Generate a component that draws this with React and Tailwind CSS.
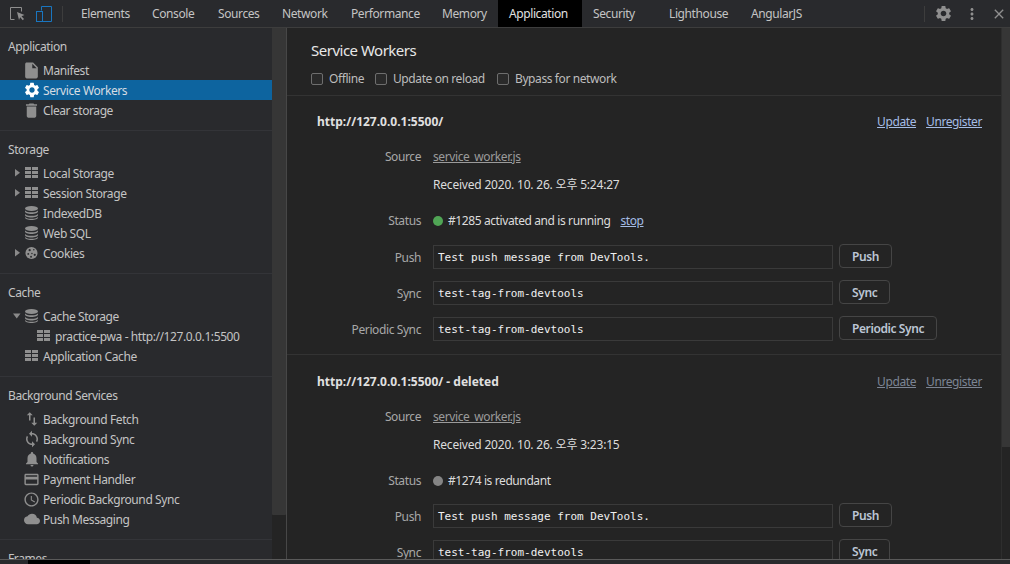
import {
  MdSettings,
  MdDelete,
  MdInsertDriveFile,
  MdSwapVert,
  MdSync,
  MdNotifications,
  MdCreditCard,
  MdAccessTime,
  MdCloud,
  MdMoreVert,
  MdClose,
} from "react-icons/md";

const tabs = [
  { name: "Elements", width: "w-[71px]" },
  { name: "Console", width: "w-[66px]" },
  { name: "Sources", width: "w-[64px]" },
  { name: "Network", width: "w-[69px]" },
  { name: "Performance", width: "w-[91px]" },
  { name: "Memory", width: "w-[67px]" },
  { name: "Application", width: "w-[84px]", active: true },
  { name: "Security", width: "w-[76px]" },
  { name: "Lighthouse", width: "w-[82px]" },
  { name: "AngularJS", width: "w-[80px]" },
];

function GridIcon() {
  return (
    <svg width="13" height="12" viewBox="0 0 13 12" fill="#8f8f8f">
      <rect x="0" y="0" width="6" height="3" />
      <rect x="7" y="0" width="6" height="3" />
      <rect x="0" y="4" width="6" height="3" />
      <rect x="7" y="4" width="6" height="3" />
      <rect x="0" y="8" width="6" height="3" />
      <rect x="7" y="8" width="6" height="3" />
    </svg>
  );
}

function DbIcon() {
  return (
    <svg width="13" height="14" viewBox="0 0 13 14" fill="#8f8f8f">
      <ellipse cx="6.5" cy="2.5" rx="6.5" ry="2.5" />
      <path d="M0 4v1.500C0 6.900 2.900 8 6.500 8S13 6.900 13 5.500V4C13 5.400 10.100 6.300 6.500 6.300S0 5.400 0 4z" />
      <path d="M0 7.500V9c0 1.400 2.900 2.500 6.500 2.500S13 10.400 13 9V7.500c0 1.400-2.900 2.300-6.500 2.300S0 8.900 0 7.500z" />
      <path d="M0 10.500V11.500C0 12.900 2.900 14 6.500 14S13 12.900 13 11.500V10.500c0 1.400-2.900 2.300-6.500 2.300S0 11.900 0 10.500z" />
    </svg>
  );
}

function CookieIcon() {
  return (
    <svg width="14" height="14" viewBox="0 0 14 14">
      <circle cx="7" cy="7" r="6.500" fill="#8f8f8f" />
      <circle cx="5" cy="4" r="1.200" fill="#292a2d" />
      <circle cx="9.500" cy="3.500" r="0.800" fill="#292a2d" />
      <circle cx="3.500" cy="8" r="1" fill="#292a2d" />
      <circle cx="7.500" cy="7.500" r="0.800" fill="#292a2d" />
      <circle cx="10.500" cy="9" r="1.200" fill="#292a2d" />
      <circle cx="6.500" cy="11" r="1" fill="#292a2d" />
    </svg>
  );
}

function Caret({ open }) {
  return (
    <svg width="8" height="8" viewBox="0 0 8 8" fill="#8a8a8a" className="shrink-0">
      {open ? <path d="M0 1.500h7.500L3.750 6.500z" /> : <path d="M2 0v7.500L7 3.750z" />}
    </svg>
  );
}

function InspectIcon() {
  return (
    <svg width="16" height="14" viewBox="0 0 16 14" fill="none">
      <path d="M4.500 12.500H.5V.5h11v4" stroke="#8f8f8f" />
      <path d="M7 5l7.500 3-3 1.200 2.500 2.800-1.300 1.200-2.500-2.900L9 13z" fill="#8f8f8f" />
    </svg>
  );
}

function DeviceIcon() {
  return (
    <svg width="16" height="16" viewBox="0 0 16 16" fill="none" stroke="#1a76c0">
      <path d="M5.500 4.500V.5h10v15h-10" />
      <rect x="0.500" y="5.500" width="6" height="10" />
    </svg>
  );
}

function Row({ icon, label, caret, nested, selected }) {
  return (
    <div
      className={`flex h-5 items-center whitespace-nowrap ${nested ? "pl-[37px]" : "pl-[25px]"} ${
        selected ? "bg-[#0d649f] text-[#d6dce2]" : "text-[#c4c4c4]"
      }`}
    >
      <span className="relative flex w-[13px] shrink-0 items-center justify-center">
        {caret && (
          <span className="absolute left-[-12px] flex">
            <Caret open={caret === "open"} />
          </span>
        )}
        {icon}
      </span>
      <span className="ml-[5px] pt-[2px]">{label}</span>
    </div>
  );
}

function Section({ title, children, last }) {
  return (
    <div className={`pb-[10px] ${last ? "" : "border-b border-[#333438]"}`}>
      <div className="flex h-[32px] items-start pl-2 pt-[10px] leading-[18px] text-[#c4c4c4]">{title}</div>
      {children}
    </div>
  );
}

function Sidebar() {
  const mi = "shrink-0 text-[#8f8f8f]";
  return (
    <div className="w-[272px] shrink-0 overflow-hidden bg-[#292a2d]">
      <Section title="Application">
        <Row label="Manifest" icon={<MdInsertDriveFile size={19} className={mi} />} />
        <Row label="Service Workers" selected icon={<MdSettings size={18} className="shrink-0 text-white" />} />
        <Row label="Clear storage" icon={<MdDelete size={19} className={mi} />} />
      </Section>
      <Section title="Storage">
        <Row label="Local Storage" caret="closed" icon={<GridIcon />} />
        <Row label="Session Storage" caret="closed" icon={<GridIcon />} />
        <Row label="IndexedDB" icon={<DbIcon />} />
        <Row label="Web SQL" icon={<DbIcon />} />
        <Row label="Cookies" caret="closed" icon={<CookieIcon />} />
      </Section>
      <Section title="Cache">
        <Row label="Cache Storage" caret="open" icon={<DbIcon />} />
        <Row label="practice-pwa - http://127.0.0.1:5500" nested icon={<GridIcon />} />
        <Row label="Application Cache" icon={<GridIcon />} />
      </Section>
      <Section title="Background Services">
        <Row label="Background Fetch" icon={<MdSwapVert size={18} className={mi} />} />
        <Row label="Background Sync" icon={<MdSync size={18} className={mi} />} />
        <Row label="Notifications" icon={<MdNotifications size={18} className={mi} />} />
        <Row label="Payment Handler" icon={<MdCreditCard size={17} className={mi} />} />
        <Row label="Periodic Background Sync" icon={<MdAccessTime size={17} className={mi} />} />
        <Row label="Push Messaging" icon={<MdCloud size={16} className={mi} />} />
      </Section>
      <Section title="Frames" last />
    </div>
  );
}

function Check({ label, className }) {
  return (
    <div className={`flex items-center ${className}`}>
      <span className="h-3 w-3 rounded-[2px] border border-[#6e6e6e] bg-[#2a2a2a]" />
      <span className="ml-[6px] text-[#bdbdbd]">{label}</span>
    </div>
  );
}

function FormRow({ label, className, labelClass, children }) {
  return (
    <div className={`flex items-center ${className}`}>
      <div className={`w-[104px] shrink-0 text-right text-[#a8a8a8] ${labelClass}`}>{label}</div>
      <div className="ml-3 flex min-w-0 flex-1 items-center">{children}</div>
    </div>
  );
}

function InputRow({ label, value, button, className }) {
  return (
    <FormRow label={label} className={`h-6 ${className}`} labelClass="pt-[2px]">
      <div className="flex h-6 w-[400px] shrink-0 items-center border border-[#3a3a3a] pl-1 pt-[2px] font-['DejaVu_Sans_Mono',monospace] text-[11px] tracking-normal text-[#f0f0f0]">
        {value}
      </div>
      <button className="mb-[2px] ml-[6px] h-6 rounded-[4px] border border-[#454545] bg-[#242424] px-3 pt-[2px] font-semibold text-[#bcc6d4]">
        {button}
      </button>
    </FormRow>
  );
}

function Worker({ deleted, received, status, dot, stop, border, topClass, sourceClass, pushClass }) {
  const linkColor = deleted ? "text-[#7c8594]" : "text-[#a5bde6]";
  return (
    <div className={`pl-[30px] pr-[19px] ${topClass} ${border ? "border-b border-[#333333] pb-[13px]" : ""}`}>
      <div className="flex h-5 items-center justify-between">
        <span className="font-bold tracking-normal text-[#e0e0e0]">
          http://127.0.0.1:5500/{deleted ? " - deleted" : ""}
        </span>
        <div className="flex gap-[10px]">
          <span className={`underline ${linkColor}`}>Update</span>
          <span className={`underline ${linkColor}`}>Unregister</span>
        </div>
      </div>
      <FormRow label="Source" className={`h-5 ${sourceClass}`}>
        <span className="text-[#9b9b9b] underline">service_worker.js</span>
      </FormRow>
      <FormRow label="" className="mt-2 h-5">
        <span className="tracking-[-0.2px] text-[#dcdcdc]">{received}</span>
      </FormRow>
      <FormRow label="Status" className="mt-4 h-5">
        <span className={`h-[10px] w-[10px] rounded-full ${dot}`} />
        <span className="ml-[5px] text-[#dcdcdc]">{status}</span>
        {stop && <span className="ml-[10px] text-[#a5bde6] underline">stop</span>}
      </FormRow>
      <InputRow label="Push" value="Test push message from DevTools." button="Push" className={pushClass} />
      <InputRow label="Sync" value="test-tag-from-devtools" button="Sync" className="mt-3" />
      {!deleted && (
        <InputRow label="Periodic Sync" value="test-tag-from-devtools" button="Periodic Sync" className="mt-3" />
      )}
    </div>
  );
}

export default function App() {
  return (
    <div className="flex h-[564px] w-[1010px] flex-col overflow-hidden bg-[#242424] font-['Noto_Sans','Noto_Sans_CJK_KR',sans-serif] text-[12px] tracking-[-0.4px]">
      {/* Toolbar */}
      <div className="flex h-[28px] shrink-0 items-center border-b border-[#3d3d3d] bg-[#292a2d]">
        <div className="flex w-[62px] shrink-0 items-center pl-[10px]">
          <InspectIcon />
          <span className="ml-[10px] flex">
            <DeviceIcon />
          </span>
        </div>
        <div className="h-4 w-px bg-[#3d3d3d]" />
        <div className="ml-[7px] flex h-full">
          {tabs.map((t) => (
            <div
              key={t.name}
              className={`flex h-full items-center pl-[11px] ${t.width} ${
                t.active ? "bg-black text-[#e0e0e0]" : "text-[#c4c4c4]"
              }`}
            >
              {t.name}
            </div>
          ))}
        </div>
        <div className="ml-auto flex items-center pr-[3px]">
          <div className="h-4 w-px bg-[#3d3d3d]" />
          <MdSettings size={19} className="ml-[9px] text-[#8f8f8f]" />
          <MdMoreVert size={18} className="ml-[10px] text-[#8f8f8f]" />
          <MdClose size={16} className="ml-[10px] text-[#8f8f8f]" />
        </div>
      </div>

      <div className="flex min-h-0 flex-1">
        <Sidebar />
        {/* sidebar scrollbar */}
        <div className="w-[14px] shrink-0 bg-[#242424]">
          <div className="h-[487px] rounded-b-[1px] bg-[#363636]" />
        </div>
        <div className="w-px shrink-0 bg-[#474747]" />

        {/* Main pane */}
        <div className="min-w-0 flex-1 overflow-hidden">
          <div className="border-b border-[#333333] pb-[7px] pl-[24px] pt-[11px]">
            <div className="h-[22px] text-[15px] leading-[22px] tracking-[-0.5px] text-[#e8e8e8]">Service Workers</div>
            <div className="mt-[9px] flex h-[18px]">
              <Check label="Offline" className="w-[64px]" />
              <Check label="Update on reload" className="w-[122px]" />
              <Check label="Bypass for network" />
            </div>
          </div>
          <Worker
            border
            topClass="pt-[16px]"
            sourceClass="mt-[15px]"
            pushClass="mt-[14px]"
            received="Received 2020. 10. 26. 오후 5:24:27"
            status="#1285 activated and is running"
            dot="bg-[#50a555]"
            stop
          />
          <Worker
            deleted
            topClass="pt-[17px]"
            sourceClass="mt-[15px]"
            pushClass="mt-[13px]"
            received="Received 2020. 10. 26. 오후 3:23:15"
            status="#1274 is redundant"
            dot="bg-[#858585]"
          />
        </div>

        {/* main scrollbar */}
        <div className="w-[9px] shrink-0 border-l border-[#2e2e2e] bg-[#242424]">
          <div className="h-[419px] bg-[#363636]" />
        </div>
      </div>

      {/* Bottom drawer edge */}
      <div className="h-[5px] shrink-0 border-t border-[#5a5a5a] bg-[#292a2d] pl-[28px]">
        <div className="h-full w-[62px] bg-black" />
      </div>
    </div>
  );
}
